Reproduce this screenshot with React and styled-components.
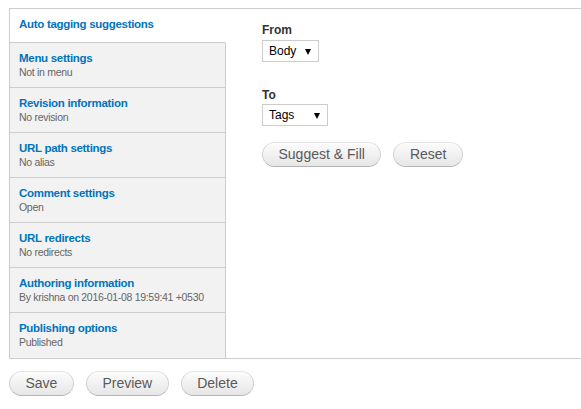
import React from "react";
import styled, { createGlobalStyle } from "styled-components";

const Global = createGlobalStyle`
  html, body { margin: 0; padding: 0; overflow: hidden; background: #fff; }
  body { font-family: "Liberation Sans", Arial, sans-serif; color: #333; }
`;

const Page = styled.div`
  padding: 8px 0 0 9px;
  width: 640px;
`;

const Panel = styled.div`
  display: flex;
  border: 1px solid #ccc;
  background: #fff;
`;

const TabList = styled.ul`
  list-style: none;
  margin: 0;
  padding: 0;
  width: 216px;
  flex: none;
  display: flex;
  flex-direction: column;
`;

const Tab = styled.li`
  box-sizing: border-box;
  height: ${(p) => (p.$selected ? 34 : 45)}px;
  padding: 8px 9px 0;
  background: ${(p) => (p.$selected ? "#fff" : "#f2f2f2")};
  border-right: 1px solid ${(p) => (p.$selected ? "transparent" : "#ccc")};
  border-bottom: ${(p) => (p.$last ? "none" : "1px solid #ccc")};
  white-space: nowrap;
  overflow: hidden;
`;

const TabTitle = styled.a`
  display: block;
  font-size: 11.5px;
  letter-spacing: -0.3px;
  font-weight: bold;
  line-height: 15px;
  color: #0074bd;
  text-decoration: none;
`;

const TabSummary = styled.div`
  font-size: 10.5px;
  letter-spacing: -0.3px;
  line-height: 13px;
  color: #666;
`;

const Pane = styled.div`
  flex: 1;
  padding: 13px 0 0 36px;
`;

const FormItem = styled.div`
  display: flex;
  flex-direction: column;
  align-items: flex-start;
  margin-bottom: ${(p) => p.$mb || 0}px;
`;

const Label = styled.label`
  font-size: 12px;
  font-weight: bold;
  line-height: 16px;
  color: #333;
  margin-bottom: ${(p) => p.$mb || 2}px;
`;

const SelectBox = styled.div`
  box-sizing: border-box;
  width: ${(p) => p.$w}px;
  height: 22px;
  border: 1px solid #ccc;
  background: #fff;
  display: flex;
  align-items: center;
  justify-content: space-between;
  padding: 0 7px 0 6px;
  font-size: 12px;
  color: #000;
`;

const Arrow = styled.span`
  width: 0;
  height: 0;
  border-left: 3px solid transparent;
  border-right: 3px solid transparent;
  border-top: 6px solid #000;
  margin-top: 1px;
`;

const ButtonRow = styled.div`
  display: flex;
  gap: 12px;
  margin-top: ${(p) => p.$mt || 0}px;
`;

const Button = styled.button`
  box-sizing: border-box;
  height: 25px;
  padding: 0 15.5px;
  border: 1px solid #d2d2d2;
  border-top-color: #e4e4e4;
  border-bottom-color: #b4b4b4;
  border-radius: 20px;
  background: linear-gradient(#fcfcfc, #e6e6e6);
  font-family: "Liberation Sans", Arial, sans-serif;
  font-size: 14px;
  line-height: 17px;
  color: #5a5a5a;
  cursor: pointer;
`;

const tabs = [
  ["Menu settings", "Not in menu"],
  ["Revision information", "No revision"],
  ["URL path settings", "No alias"],
  ["Comment settings", "Open"],
  ["URL redirects", "No redirects"],
  ["Authoring information", "By krishna on 2016-01-08 19:59:41 +0530"],
  ["Publishing options", "Published"],
];

export default function App() {
  return (
    <Page>
      <Global />
      <Panel>
        <TabList>
          <Tab $selected>
            <TabTitle href="#">Auto tagging suggestions</TabTitle>
          </Tab>
          {tabs.map(([t, s], i) => (
            <Tab key={t} $last={i === tabs.length - 1}>
              <TabTitle href="#">{t}</TabTitle>
              <TabSummary>{s}</TabSummary>
            </Tab>
          ))}
        </TabList>
        <Pane>
          <FormItem $mb={25}>
            <Label>From</Label>
            <SelectBox $w={57}>
              <span>Body</span>
              <Arrow />
            </SelectBox>
          </FormItem>
          <FormItem>
            <Label $mb={1}>To</Label>
            <SelectBox $w={66}>
              <span>Tags</span>
              <Arrow />
            </SelectBox>
          </FormItem>
          <ButtonRow $mt={16}>
            <Button>Suggest &amp; Fill</Button>
            <Button>Reset</Button>
          </ButtonRow>
        </Pane>
      </Panel>
      <ButtonRow $mt={12}>
        <Button>Save</Button>
        <Button>Preview</Button>
        <Button>Delete</Button>
      </ButtonRow>
    </Page>
  );
}
